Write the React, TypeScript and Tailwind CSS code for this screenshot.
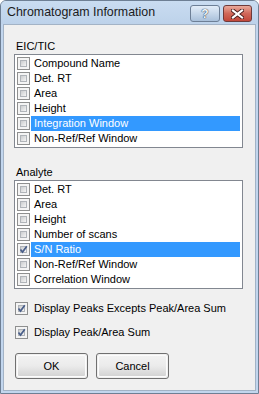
import React from "react";

const FONT = { fontFamily: '"Liberation Sans", Arial, sans-serif' };

type Item = { label: string; checked?: boolean; selected?: boolean };

const eicItems: Item[] = [
  { label: "Compound Name" },
  { label: "Det. RT" },
  { label: "Area" },
  { label: "Height" },
  { label: "Integration Window", selected: true },
  { label: "Non-Ref/Ref Window" },
];

const analyteItems: Item[] = [
  { label: "Det. RT" },
  { label: "Area" },
  { label: "Height" },
  { label: "Number of scans" },
  { label: "S/N Ratio", checked: true, selected: true },
  { label: "Non-Ref/Ref Window" },
  { label: "Correlation Window" },
];

function CheckBox({ checked }: { checked?: boolean }) {
  return (
    <div className="relative w-[13px] h-[13px] shrink-0 border border-[#8e8f8f] bg-[#f4f4f4] p-[2px]">
      <div className="w-full h-full border border-[#b0b4b9] bg-gradient-to-br from-[#cbcdcf] to-[#f5f5f5]" />
      {checked && (
        <svg className="absolute left-0 top-0" width="11" height="11" viewBox="0 0 11 11">
          <path d="M2.5 5.5 L4.5 8 L8.8 2.2" fill="none" stroke="#4a5f8a" strokeWidth="1.7" />
        </svg>
      )}
    </div>
  );
}

function CheckList({ items }: { items: Item[] }) {
  return (
    <div className="w-[229px] border border-[#828790] bg-white pt-px pb-px">
      {items.map((it) => (
        <div key={it.label} className="flex items-center h-[15px] pl-[2px]">
          <CheckBox checked={it.checked} />
          <div
            className={`flex items-center h-[15px] ml-px pl-[3px] w-[209px] text-[11px] leading-[13px] ${
              it.selected ? "bg-[#3399ff] text-white" : "text-black"
            }`}
          >
            {it.label}
          </div>
        </div>
      ))}
    </div>
  );
}

function WinButton({ label }: { label: string }) {
  return (
    <button className="w-[73px] h-[26px] rounded-[3px] border border-[#707070] p-px">
      <div className="w-full h-full rounded-[2px] border border-[#fcfcfc] bg-gradient-to-b from-[#f2f2f2] via-[#ebebeb] to-[#d4d4d4] flex items-center justify-center text-[11px] text-black">
        {label}
      </div>
    </button>
  );
}

export default function App() {
  return (
    <div style={FONT} className="w-[259px] h-[394px] flex flex-col bg-[#c2d6ee] border border-[#6e7f94] rounded-t-[6px] overflow-hidden">
      {/* title bar */}
      <div className="h-[23px] shrink-0 flex items-start pl-[6px] pr-[6px] bg-gradient-to-b from-[#c9dcf1] to-[#bdd2ea]">
        <span className="mt-[4px] text-[12.4px] leading-[15px] text-[#1b1b1b]">Chromatogram Information</span>
        <div className="ml-auto mt-[4px] flex gap-[3px]">
          <div className="w-[30px] h-[17px] rounded-[3px] border border-[#6d7f96] bg-gradient-to-b from-[#e3edf8] via-[#c6d7ea] to-[#a9c0da] flex items-center justify-center">
            <span className="text-[12px] leading-[12px] font-bold text-[#f4f7fb] [text-shadow:0_0_1px_#1f3048,0_0_1px_#1f3048]">?</span>
          </div>
          <div className="w-[29px] h-[17px] rounded-[3px] border border-[#6e3a3a] bg-gradient-to-b from-[#e9a99b] via-[#d0685a] to-[#c2473a] flex items-center justify-center">
            <svg width="13" height="10" viewBox="0 0 13 10">
              <path d="M2 1.5 L11 8.5 M11 1.5 L2 8.5" stroke="#4a1f1f" strokeWidth="4" strokeLinecap="square" />
              <path d="M2 1.5 L11 8.5 M11 1.5 L2 8.5" stroke="#ffffff" strokeWidth="2.2" strokeLinecap="square" />
            </svg>
          </div>
        </div>
      </div>

      {/* client area */}
      <div className="flex-1 mx-[2px] mb-[2px] border border-[#a3b3c6] bg-[#f0f0f0] flex flex-col pl-[10px] pt-[15px]">
        <div className="h-[13px] pl-[2px] text-[11px] leading-[13px] text-black">EIC/TIC</div>
        <div className="mt-px">
          <CheckList items={eicItems} />
        </div>

        <div className="mt-[18px] h-[13px] pl-[2px] text-[11px] leading-[13px] text-black">Analyte</div>
        <div className="mt-px">
          <CheckList items={analyteItems} />
        </div>

        <div className="mt-[13px] flex items-center pl-px">
          <CheckBox checked />
          <span className="ml-[6px] text-[11px] leading-[13px] text-black">Display Peaks Excepts Peak/Area Sum</span>
        </div>
        <div className="mt-[11px] flex items-center pl-px">
          <CheckBox checked />
          <span className="ml-[6px] text-[11px] leading-[13px] text-black">Display Peak/Area Sum</span>
        </div>

        <div className="mt-[14px] flex gap-[8px] pl-px">
          <WinButton label="OK" />
          <WinButton label="Cancel" />
        </div>
      </div>
    </div>
  );
}
